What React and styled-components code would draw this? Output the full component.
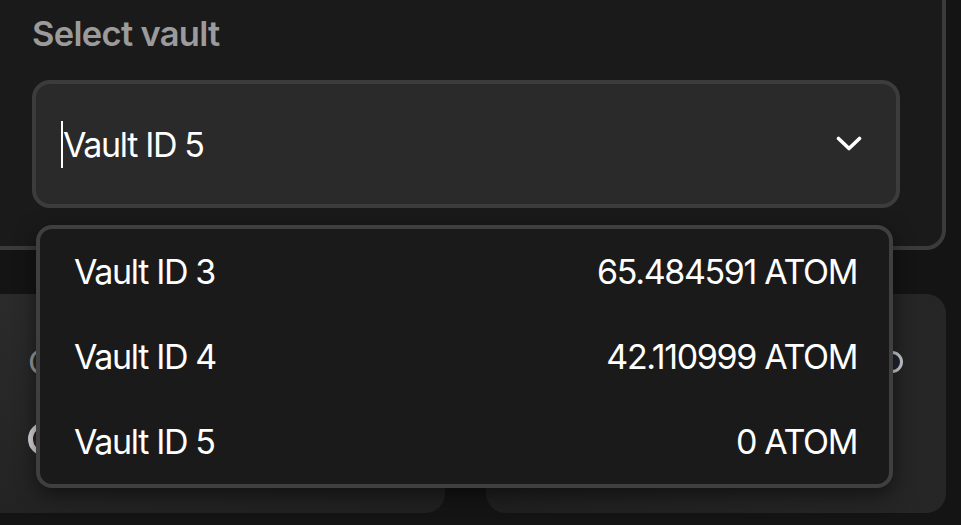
import React from 'react'
import styled, { createGlobalStyle } from 'styled-components'

const GlobalStyle = createGlobalStyle`
  html, body {
    margin: 0;
    padding: 0;
    background: #141414;
  }
  body {
    font-family: Inter, "Noto Sans", sans-serif;
    -webkit-font-smoothing: antialiased;
  }
`

const Screen = styled.div`
  position: relative;
  width: 961px;
  height: 525px;
  overflow: hidden;
  background: #141414;
`

const Column = styled.div`
  margin-left: -20px;
  width: 966px;
  display: flex;
  flex-direction: column;
`

const Panel = styled.section`
  margin-top: -20px;
  height: 270px;
  box-sizing: border-box;
  border: 4px solid #3b3b3b;
  border-radius: 20px;
  background: #1a1a1a;
  padding: 30px 42px 0 48px;
  display: flex;
  flex-direction: column;
`

const Label = styled.div`
  font-size: 34.5px;
  line-height: 40px;
  font-weight: 600;
  color: #9b9b9b;
  letter-spacing: -0.02em;
`

const SelectBox = styled.div`
  margin-top: 26px;
  height: 128px;
  box-sizing: border-box;
  border: 4px solid #3c3c3c;
  border-radius: 18px;
  background: #2a2a2a;
  display: flex;
  align-items: center;
  justify-content: space-between;
  padding: 0 34px 0 25px;
`

const Value = styled.div`
  display: flex;
  align-items: center;
  font-size: 34px;
  color: #fff;
  letter-spacing: -0.04em;
`

const Caret = styled.span`
  width: 2px;
  height: 47px;
  background: #fff;
`

const CardRow = styled.div`
  margin-top: 44px;
  display: grid;
  grid-template-columns: 465px 460px;
  gap: 41px;
`

const Card = styled.div`
  height: 219px;
  box-sizing: border-box;
  border-radius: 20px;
  background: ${p => p.$left
    ? 'linear-gradient(160deg, #2b2b2b 0%, #232323 60%, #202020 100%)'
    : 'linear-gradient(90deg, #1f1f1f 0%, #262626 100%)'};
  padding: 48px 43px 0 48px;
  display: flex;
  flex-direction: column;
  gap: 40px;
`

const CardTitle = styled.div`
  font-size: 33px;
  line-height: 40px;
  color: #9b9b9b;
  letter-spacing: -0.02em;
  display: flex;
  justify-content: space-between;
  align-items: center;
`

const Coin = styled.div`
  width: 34px;
  height: 34px;
  border-radius: 50%;
  box-sizing: border-box;
  border: 5px solid #d8d8dc;
  background: #2e1f26;
`

const InfoDot = styled.div`
  width: 22px;
  height: 22px;
  border-radius: 50%;
  box-sizing: border-box;
  border: 3px solid #c8c8d0;
  background: #1d2330;
`

const Menu = styled.ul`
  position: absolute;
  left: 36px;
  top: 225px;
  width: 857px;
  margin: 0;
  padding: 0;
  list-style: none;
  box-sizing: border-box;
  border: 4px solid #3f3f3f;
  border-radius: 16px;
  background: #1a1a1a;
  box-shadow: 0 6px 20px rgba(0, 0, 0, 0.5);
`

const Item = styled.li`
  height: 85px;
  display: flex;
  align-items: center;
  justify-content: space-between;
  padding: 0 32px 0 34px;
  font-size: 34px;
  color: #fff;
  letter-spacing: -0.04em;
`

const vaults = [
  { id: 3, amount: '65.484591 ATOM' },
  { id: 4, amount: '42.110999 ATOM' },
  { id: 5, amount: '0 ATOM' },
]

const Chevron = () => (
  <svg width="26" height="16" viewBox="0 0 26 16" fill="none">
    <path d="M2.5 2.5 L13 12.5 L23.5 2.5" stroke="#fff" strokeWidth="3.6" strokeLinecap="round" strokeLinejoin="round" />
  </svg>
)

export default function App() {
  return (
    <Screen>
      <GlobalStyle />
      <Column>
        <Panel>
          <Label>Select vault</Label>
          <SelectBox>
            <Value><Caret />Vault ID 5</Value>
            <Chevron />
          </SelectBox>
        </Panel>
        <CardRow>
          <Card $left>
            <CardTitle>Collateral</CardTitle>
            <Coin />
          </Card>
          <Card>
            <CardTitle>Debt <InfoDot /></CardTitle>
          </Card>
        </CardRow>
      </Column>
      <Menu>
        {vaults.map(v => (
          <Item key={v.id}>
            <span>Vault ID {v.id}</span>
            <span>{v.amount}</span>
          </Item>
        ))}
      </Menu>
    </Screen>
  )
}
